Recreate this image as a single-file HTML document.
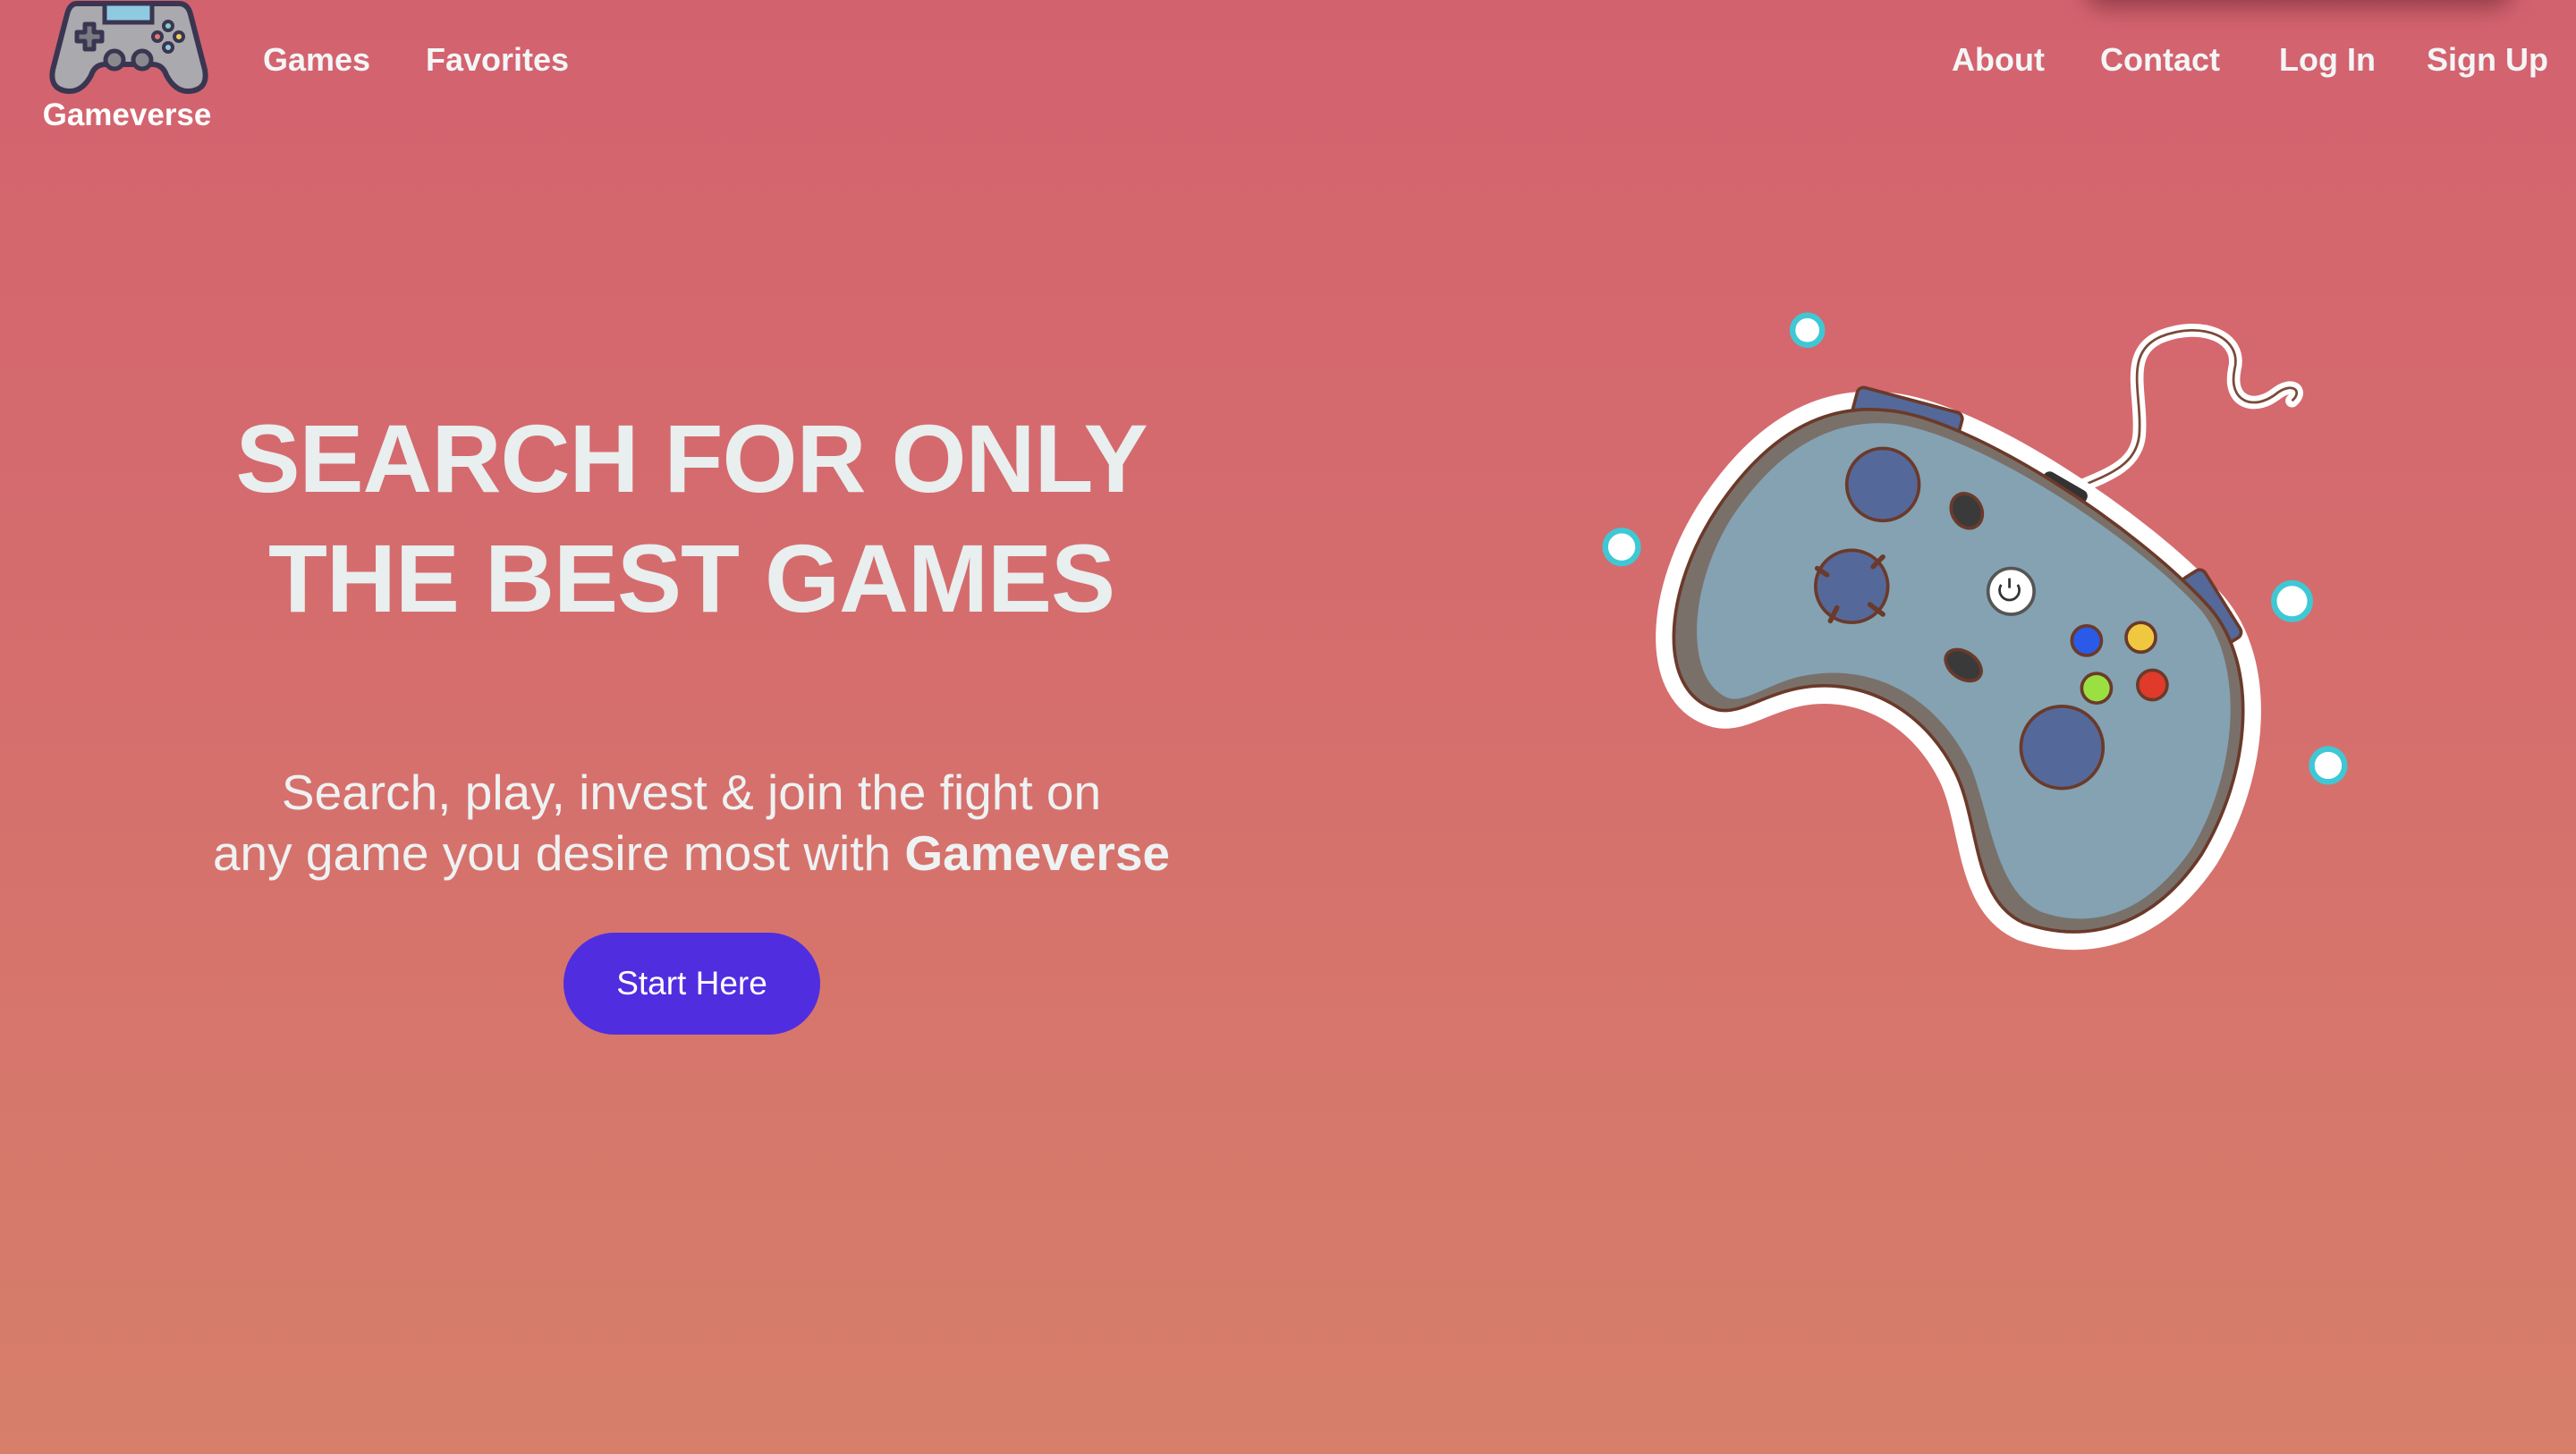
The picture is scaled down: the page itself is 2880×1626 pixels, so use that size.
<!DOCTYPE html>
<html><head><meta charset="utf-8"><style>
html,body{margin:0;padding:0}
body{width:2880px;height:1626px;overflow:hidden;position:relative;background:linear-gradient(180deg,#d3626f 0%,#d56f6d 50%,#d77f6a 100%);font-family:"Liberation Sans",sans-serif;}
.nav{position:absolute;top:45px;color:#f3f6f6;font-weight:bold;font-size:36px;line-height:44px;}
.h1{position:absolute;left:0;width:1546px;text-align:center;color:#e9eeee;font-weight:bold;font-size:108px;line-height:134px;top:446px;margin:0;letter-spacing:-1px}
.sub{position:absolute;left:0;width:1546px;text-align:center;color:#eef2f2;font-size:55px;line-height:68px;top:852px}
.btn{position:absolute;left:630px;top:1043px;width:287px;height:114px;border-radius:57px;background:#512de0;color:#fff;font-size:37px;line-height:114px;text-align:center}
.shadow{position:absolute;left:2330px;top:-40px;width:480px;height:50px;border-radius:30px;background:rgba(110,40,50,.6);filter:blur(12px)}
</style></head><body>
<div class="shadow"></div>
<svg style="position:absolute;left:0;top:0" width="300" height="120" viewBox="0 0 300 120">
<path d="M86,4 L200,4 Q210,4 213,16 L229,78 Q233,100 212,102 Q196,103 186,84 Q182,72 170,72 L118,72 Q106,72 102,84 Q92,103 76,102 Q55,100 59,78 L75,16 Q78,4 86,4Z" fill="#a9a9ae" stroke="#3a3652" stroke-width="6" stroke-linejoin="round"/>
<rect x="117" y="4" width="53" height="21" fill="#8fcbe0" stroke="#3a3652" stroke-width="5"/>
<path d="M95,27 h10 v9 h9 v10 h-9 v9 h-10 v-9 h-9 v-10 h9z" fill="#7b7b82" stroke="#3a3652" stroke-width="5" stroke-linejoin="round"/>
<circle cx="128" cy="67" r="10" fill="#8a8a8e" stroke="#3a3652" stroke-width="5"/>
<circle cx="159" cy="67" r="10" fill="#8a8a8e" stroke="#3a3652" stroke-width="5"/>
<g stroke="#3a3652" stroke-width="4"><circle cx="188" cy="29" r="5" fill="#7fd3c0"/><circle cx="176" cy="41" r="5" fill="#e07a70"/><circle cx="200" cy="41" r="5" fill="#e8d060"/><circle cx="188" cy="53" r="5" fill="#8fcbe0"/></g>
</svg>
<div style="position:absolute;left:40px;width:204px;text-align:center;top:109px;color:#fff;font-weight:bold;font-size:35px">Gameverse</div>
<div class="nav" style="left:294px">Games</div>
<div class="nav" style="left:476px">Favorites</div>
<div class="nav" style="left:2182px">About</div>
<div class="nav" style="left:2348px">Contact</div>
<div class="nav" style="left:2548px">Log In</div>
<div class="nav" style="left:2713px">Sign Up</div>
<div class="h1">SEARCH FOR ONLY<br>THE BEST GAMES</div>
<div class="sub">Search, play, invest &amp; join the fight on<br>any game you desire most with <b>Gameverse</b></div>
<div class="btn">Start Here</div>
<svg style="position:absolute;left:0;top:0" width="2880" height="1626" viewBox="0 0 1567.8 885.2">
<path d="M1257,300 C1280,290 1300,285 1302,265 C1304,240 1292,215 1315,205 C1340,195 1365,205 1360,225 C1356,245 1372,250 1385,240 C1395,232 1402,238 1395,244" fill="none" stroke="#fff" stroke-width="8" stroke-linecap="round"/>
<path d="M1257,300 C1280,290 1300,285 1302,265 C1304,240 1292,215 1315,205 C1340,195 1365,205 1360,225 C1356,245 1372,250 1385,240 C1395,232 1402,238 1395,244" fill="none" stroke="#7a4a3a" stroke-width="1.5"/>
<path d="M1045,432 C1008,422 1012,360 1045,310 C1075,265 1110,245 1150,250 C1200,255 1300,320 1345,370 C1375,405 1370,470 1340,520 C1310,565 1270,575 1232,562 C1200,548 1205,500 1190,470 C1170,430 1130,410 1090,420 C1070,425 1058,435 1045,432 Z" fill="#fff" stroke="#fff" stroke-width="22" stroke-linejoin="round"/>
<rect x="1128" y="243" width="66" height="18" rx="4" fill="#55689a" stroke="#6b3a2a" stroke-width="2" transform="rotate(15 1160 252)"/>
<rect x="1322" y="362" width="48" height="16" rx="4" fill="#55689a" stroke="#6b3a2a" stroke-width="2" transform="rotate(58 1346 370)"/>
<rect x="1240" y="292" width="30" height="16" rx="4" fill="#333" transform="rotate(30 1255 300)"/>
<path d="M1045,432 C1008,422 1012,360 1045,310 C1075,265 1110,245 1150,250 C1200,255 1300,320 1345,370 C1375,405 1370,470 1340,520 C1310,565 1270,575 1232,562 C1200,548 1205,500 1190,470 C1170,430 1130,410 1090,420 C1070,425 1058,435 1045,432 Z" fill="#7a706a" stroke="#6b3a2a" stroke-width="2"/>
<path d="M1052,425 C1026,415 1026,360 1054,315 C1083,272 1115,255 1152,258 C1200,263 1298,325 1340,372 C1366,405 1362,468 1335,515 C1305,560 1270,565 1242,555 C1215,542 1212,500 1200,468 C1180,425 1140,402 1095,412 C1075,417 1062,428 1052,425Z" fill="#84a2b2"/>
<g stroke="#6b3a2a" stroke-width="2">
<circle cx="1146" cy="295" r="22" fill="#55689a"/>
<circle cx="1127" cy="357" r="22" fill="#55689a"/>
<circle cx="1255" cy="455" r="25" fill="#55689a"/>
<ellipse cx="1197" cy="311" rx="9" ry="11" fill="#3a3a3a" transform="rotate(-30 1197 311)"/>
<ellipse cx="1195" cy="405" rx="8" ry="12" fill="#3a3a3a" transform="rotate(-55 1195 405)"/>
<circle cx="1224" cy="360" r="14" fill="#fff" stroke="#555"/>
<circle cx="1270" cy="390" r="9" fill="#2a5ae8"/>
<circle cx="1303" cy="388" r="9" fill="#f0c840"/>
<circle cx="1276" cy="419" r="9" fill="#9ae040"/>
<circle cx="1310" cy="417" r="9" fill="#e03a2a"/>
</g>
<path d="M1218,356 a6,6 0 1 0 10,0 M1223,352 v6" fill="none" stroke="#333" stroke-width="1.5"/>
<g stroke="#6b3a2a" stroke-width="3" stroke-linecap="round"><path d="M1112,350 l-6,-4 M1140,345 l6,-6 M1118,370 l-4,8 M1138,368 l8,6"/></g>
<g fill="#fff" stroke="#3fc8d4" stroke-width="3.5">
<circle cx="1100" cy="201" r="9"/><circle cx="987" cy="333" r="10"/><circle cx="1395" cy="366" r="11"/><circle cx="1417" cy="466" r="10"/>
</g>
</svg>
</body></html>
